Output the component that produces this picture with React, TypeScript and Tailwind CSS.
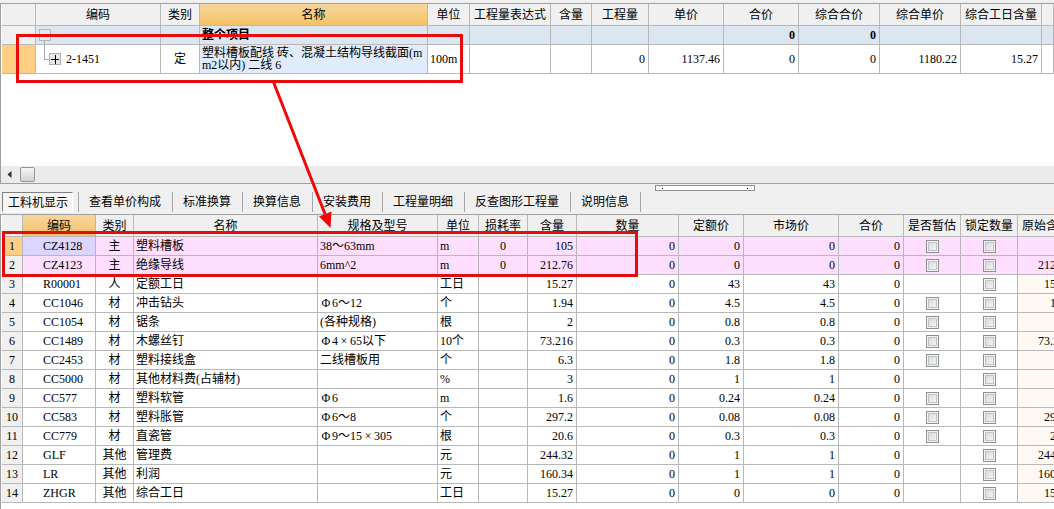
import { useState } from "react";

type Align = "left" | "center" | "right";

const alignClass: Record<Align, string> = {
  left: "text-left pl-[2px]",
  center: "text-center",
  right: "text-right pr-[3px]",
};

const cell = "border-r border-b border-[#b8b8b8] p-0 whitespace-nowrap overflow-hidden";
const headCell = "border-r border-b border-[#b8b8b8] p-0 font-normal whitespace-nowrap text-center";
const plainHead = "bg-[#f0f0f0]";
const activeHead = "bg-linear-to-b from-[#f7d79d] to-[#f3c265]";

const topColumns = [
  { title: "", width: "w-[34px]" },
  { title: "编码", width: "w-[125px]" },
  { title: "类别", width: "w-[39px]" },
  { title: "名称", width: "w-[228px]", active: true },
  { title: "单位", width: "w-[42px]" },
  { title: "工程量表达式", width: "w-[81px]" },
  { title: "含量", width: "w-[41px]" },
  { title: "工程量", width: "w-[57px]" },
  { title: "单价", width: "w-[75px]" },
  { title: "合价", width: "w-[75px]" },
  { title: "综合合价", width: "w-[81px]" },
  { title: "综合单价", width: "w-[81px]" },
  { title: "综合工日含量", width: "w-[81px]" },
  { title: "", width: "" },
];

const summaryValues = ["", "", "", "", "", "0", "0", "", "", ""];
const itemValues = ["", "", "0", "1137.46", "0", "0", "1180.22", "15.27", ""];

const tabs = ["查看单价构成", "标准换算", "换算信息", "安装费用", "工程量明细", "反查图形工程量", "说明信息"];

const bottomColumns: { title: string; width: string; align: Align; active?: boolean }[] = [
  { title: "", width: "w-[21px]", align: "center" },
  { title: "编码", width: "w-[73px]", align: "left", active: true },
  { title: "类别", width: "w-[38px]", align: "center" },
  { title: "名称", width: "w-[184px]", align: "left" },
  { title: "规格及型号", width: "w-[120px]", align: "left" },
  { title: "单位", width: "w-[41px]", align: "left" },
  { title: "损耗率", width: "w-[49px]", align: "center" },
  { title: "含量", width: "w-[49px]", align: "right" },
  { title: "数量", width: "w-[102px]", align: "right" },
  { title: "定额价", width: "w-[65px]", align: "right" },
  { title: "市场价", width: "w-[95px]", align: "right" },
  { title: "合价", width: "w-[65px]", align: "right" },
  { title: "是否暂估", width: "w-[57px]", align: "center" },
  { title: "锁定数量", width: "w-[57px]", align: "center" },
  { title: "原始含量", width: "w-[57px]", align: "right" },
];

interface Material {
  code: string;
  kind: string;
  name: string;
  spec: string;
  unit: string;
  loss: string;
  amount: string;
  price: string;
  estimable: boolean;
  original: string;
}

const m = (
  code: string, kind: string, name: string, spec: string, unit: string,
  loss: string, amount: string, price: string, estimable: boolean, original: string,
): Material => ({ code, kind, name, spec, unit, loss, amount, price, estimable, original });

const materials: Material[] = [
  m("CZ4128", "主", "塑料槽板", "38～63mm", "m", "0", "105", "0", true, ""),
  m("CZ4123", "主", "绝缘导线", "6mm^2", "m", "0", "212.76", "0", true, "212.76"),
  m("R00001", "人", "定额工日", "", "工日", "", "15.27", "43", false, "15.27"),
  m("CC1046", "材", "冲击钻头", "Φ6～12", "个", "", "1.94", "4.5", true, "1.94"),
  m("CC1054", "材", "锯条", "(各种规格)", "根", "", "2", "0.8", true, ""),
  m("CC1489", "材", "木螺丝钉", "Φ4×65以下", "10个", "", "73.216", "0.3", true, "73.216"),
  m("CC2453", "材", "塑料接线盒", "二线槽板用", "个", "", "6.3", "1.8", true, ""),
  m("CC5000", "材", "其他材料费(占辅材)", "", "%", "", "3", "1", false, ""),
  m("CC577", "材", "塑料软管", "Φ6", "m", "", "1.6", "0.24", true, ""),
  m("CC583", "材", "塑料胀管", "Φ6～8", "个", "", "297.2", "0.08", true, "297.2"),
  m("CC779", "材", "直瓷管", "Φ9～15×305", "根", "", "20.6", "0.3", true, "20.6"),
  m("GLF", "其他", "管理费", "", "元", "", "244.32", "1", false, "244.32"),
  m("LR", "其他", "利润", "", "元", "", "160.34", "1", false, "160.34"),
  m("ZHGR", "其他", "综合工日", "", "工日", "", "15.27", "0", false, "15.27"),
];

function Spec({ text }: { text: string }) {
  return (
    <>
      {text.split(/([Φ×])/).map((part, i) =>
        part === "Φ" || part === "×" ? (
          <span key={i} className="inline-block w-3 text-center">{part}</span>
        ) : (
          part
        ),
      )}
    </>
  );
}

function GridCheckbox({ label }: { label: string }) {
  return (
    <input
      type="checkbox"
      aria-label={label}
      className="mx-auto block size-[13px] appearance-none border border-[#8e8f8f] bg-linear-to-br from-[#d2d5d8] to-[#fafafa] shadow-[inset_0_0_0_1px_#f4f4f4,inset_0_0_0_2px_#c0c3c6] checked:from-[#4b6ea8] checked:to-[#4b6ea8]"
    />
  );
}

function TopGrid() {
  return (
    <table className="w-full table-fixed border-separate border-spacing-0">
      <colgroup>
        {topColumns.map((c, i) => <col key={i} className={c.width} />)}
      </colgroup>
      <thead>
        <tr className="h-[22px]">
          {topColumns.map((c, i) => (
            <th key={i} className={`${headCell} ${c.active ? activeHead : plainHead}`}>{c.title}</th>
          ))}
        </tr>
      </thead>
      <tbody>
        <tr className="h-[19px] bg-[#dce6f0] font-bold">
          <td className={`${cell} bg-[#f0f0f0]`} />
          <td className={cell}>
            <button type="button" aria-label="折叠" className="block">
              <svg width="20" height="18" viewBox="0 0 20 18" shapeRendering="crispEdges" fill="none">
                <rect x="3.5" y="3.5" width="11" height="11" fill="#e6e8ea" stroke="#b4b8bc" />
                <path d="M6 9.5h7" stroke="#b0b4b8" />
                <path d="M8.5 15v3" stroke="#a8a8a8" />
              </svg>
            </button>
          </td>
          <td className={cell} />
          <td className={`${cell} pl-[2px]`}>整个项目</td>
          {summaryValues.map((v, i) => (
            <td key={i} className={`${cell} pr-[3px] text-right`}>{v}</td>
          ))}
        </tr>
        <tr className="h-[29px]">
          <td className={`${cell} bg-[#fdce84]`} />
          <td className={cell}>
            <button type="button" className="flex items-center gap-[5px]">
              <svg width="25" height="28" viewBox="0 0 25 28" shapeRendering="crispEdges" fill="none">
                <path d="M8.5 0v14.5H13" stroke="#a8a8a8" />
                <rect x="13.5" y="8.5" width="11" height="11" fill="#e8e8e8" stroke="#b0b0b0" />
                <path d="M15 14.5h8M19.5 10v9" stroke="#000" strokeWidth="1" />
              </svg>
              2-1451
            </button>
          </td>
          <td className={`${cell} text-center`}>定</td>
          <td className={`${cell} bg-[#e0ecfd] pl-[2px] leading-3`}>
            塑料槽板配线 砖、混凝土结构导线截面(m<br />m2以内) 二线 6
          </td>
          <td className={`${cell} pl-[2px]`}>100m</td>
          {itemValues.map((v, i) => (
            <td key={i} className={`${cell} pr-[3px] text-right`}>{v}</td>
          ))}
        </tr>
      </tbody>
    </table>
  );
}

function MaterialGrid() {
  return (
    <table className="w-[1073px] min-w-full table-fixed border-separate border-spacing-0">
      <colgroup>
        {bottomColumns.map((c, i) => <col key={i} className={c.width} />)}
      </colgroup>
      <thead>
        <tr className="h-[22px]">
          {bottomColumns.map((c, i) => (
            <th key={i} className={`${headCell} ${c.active ? activeHead : plainHead}`}>{c.title}</th>
          ))}
        </tr>
      </thead>
      <tbody>
        {materials.map((r, row) => {
          const main = r.kind === "主";
          const values = [
            row + 1, r.code, r.kind, r.name, <Spec text={r.spec} />, r.unit, r.loss, r.amount, "0",
            r.price, r.price, "0",
            r.estimable ? <GridCheckbox label={`${r.name} 是否暂估`} /> : "",
            <GridCheckbox label={`${r.name} 锁定数量`} />,
            r.original,
          ];
          return (
            <tr key={r.code} className={`h-[19px] ${main ? "bg-[#ffdfff]" : "bg-white"}`}>
              {values.map((v, i) => {
                let extra = alignClass[bottomColumns[i].align];
                if (i === 0) extra += row === 0 ? " bg-[#fdce84]" : " bg-[#f0f0f0]";
                if (i === 1) extra = row === 0 ? "text-left pl-5 bg-[#dcd6ff]" : "text-left pl-5";
                if (i === 14 && !main) extra += " bg-[#fff9f5]";
                return <td key={i} className={`${cell} ${extra}`}>{v}</td>;
              })}
            </tr>
          );
        })}
      </tbody>
    </table>
  );
}

export default function App() {
  const [active, setActive] = useState("工料机显示");
  return (
    <div className="relative flex min-h-screen flex-col overflow-hidden bg-[#f0f0f0] pt-[3px] font-['Liberation_Serif','Noto_Sans_CJK_SC',serif] text-[12px] leading-4 text-black">
      <section className="border-y border-l border-[#a0a0a0] bg-white">
        <div className="min-h-[162px] pl-px">
          <TopGrid />
        </div>
        <div className="flex h-[17px] items-center bg-[#ebebeb] pl-[6px]">
          <button type="button" aria-label="向左滚动" className="mr-2 flex h-4 w-[5px] items-center">
            <svg width="5" height="7" viewBox="0 0 5 7"><path d="M4.5 0v7L0.5 3.5z" fill="#303030" /></svg>
          </button>
          <div className="h-[15px] w-[15px] rounded-xs border border-[#959595] bg-linear-to-b from-[#f6f6f6] to-[#d2d2d2]" />
        </div>
      </section>

      <nav className="relative flex h-[30px] items-end overflow-hidden pb-[2px] pl-[2px]">
        <button
          type="button"
          onClick={() => setActive("工料机显示")}
          aria-pressed={active === "工料机显示"}
          className="h-[20px] border border-t-[#808080] border-r-white border-b-white border-l-[#808080] bg-[#f5f5f5] pt-[2px] pr-1 pl-[5px] whitespace-nowrap"
        >
          工料机显示
        </button>
        <div className="ml-[5px] h-[20px] w-px bg-[#a8a8a8]" />
        {tabs.map((t) => (
          <button
            key={t}
            type="button"
            onClick={() => setActive(t)}
            aria-pressed={active === t}
            className="h-[20px] border-r border-[#a8a8a8] pr-[11px] pl-[10px] whitespace-nowrap"
          >
            {t}
          </button>
        ))}
        <div className="absolute top-px left-[655px] flex h-[6px] w-[100px] items-center justify-between border border-[#909090] bg-white px-[6px]">
          <span className="size-px bg-black" />
          <span className="size-px bg-black" />
        </div>
      </nav>

      <section className="grow overflow-hidden border-t border-l border-[#a0a0a0] bg-white pl-px">
        <MaterialGrid />
      </section>

      <svg className="pointer-events-none absolute top-0 left-0" width="1054" height="509" viewBox="0 0 1054 509" fill="none" aria-hidden="true">
        <rect x="17.5" y="35.5" width="444" height="46" stroke="#e60c0c" strokeWidth="3" />
        <rect x="3.5" y="232.5" width="633" height="43" stroke="#e60c0c" strokeWidth="3" />
        <path d="M273.5 82L325 214" stroke="#f00808" strokeWidth="3" />
        <path d="M330.5 228L319 216.5L331.5 211.5z" fill="#f00808" />
      </svg>
    </div>
  );
}
